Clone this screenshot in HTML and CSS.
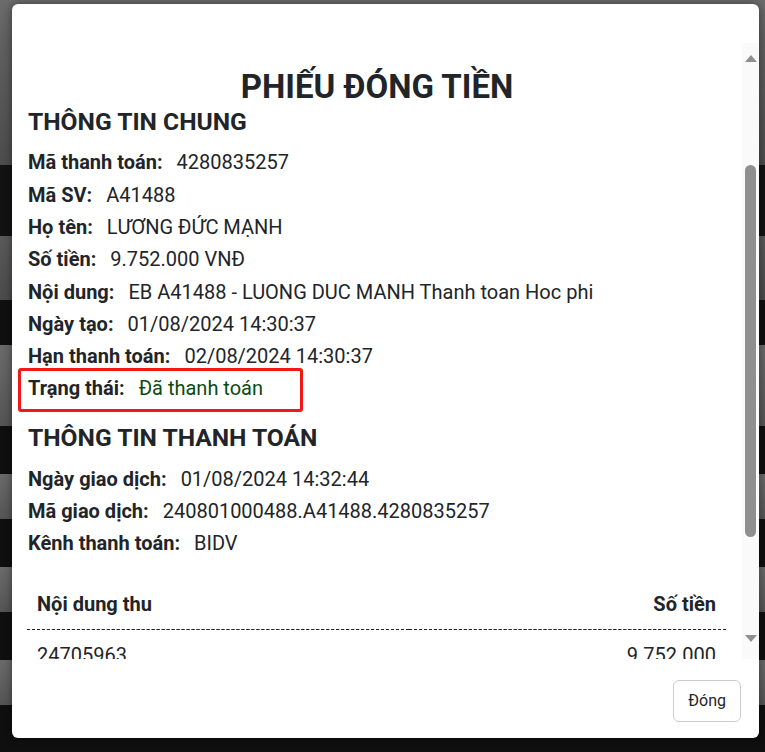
FILE: index.html
```html
<!DOCTYPE html>
<html lang="vi">
<head>
<meta charset="utf-8">
<title>Phiếu đóng tiền</title>
<link rel="stylesheet" href="styles.css">
</head>
<body>
<div class="modal">
  <div class="modal-header"></div>
  <div class="modal-body">
    <div class="scroll-area" id="scrollArea">
      <div class="receipt">
        <div class="receipt-top">
          <div class="school">Cổng thanh toán học phí</div>
        </div>
        <h2 class="title">PHIẾU ĐÓNG TIỀN</h2>
        <section class="section first">
          <h4 class="section-title">THÔNG TIN CHUNG</h4>
          <div class="row"><span class="label">Mã thanh toán:</span><span class="value">4280835257</span></div>
          <div class="row"><span class="label">Mã SV:</span><span class="value">A41488</span></div>
          <div class="row"><span class="label">Họ tên:</span><span class="value">LƯƠNG ĐỨC MẠNH</span></div>
          <div class="row"><span class="label">Số tiền:</span><span class="value">9.752.000 VNĐ</span></div>
          <div class="row"><span class="label">Nội dung:</span><span class="value">EB A41488 - LUONG DUC MANH Thanh toan Hoc phi</span></div>
          <div class="row"><span class="label">Ngày tạo:</span><span class="value">01/08/2024 14:30:37</span></div>
          <div class="row"><span class="label">Hạn thanh toán:</span><span class="value">02/08/2024 14:30:37</span></div>
          <div class="row status"><span class="label">Trạng thái:</span><span class="value paid">Đã thanh toán</span><span class="highlight"></span></div>
        </section>
        <section class="section">
          <h4 class="section-title">THÔNG TIN THANH TOÁN</h4>
          <div class="row"><span class="label">Ngày giao dịch:</span><span class="value">01/08/2024 14:32:44</span></div>
          <div class="row"><span class="label">Mã giao dịch:</span><span class="value">240801000488.A41488.4280835257</span></div>
          <div class="row"><span class="label">Kênh thanh toán:</span><span class="value">BIDV</span></div>
        </section>
        <table class="items">
          <thead>
            <tr><th class="left">Nội dung thu</th><th class="right">Số tiền</th></tr>
          </thead>
          <tbody>
            <tr><td class="left">24705963</td><td class="right">9.752.000</td></tr>
            <tr class="total"><td class="left">Tổng cộng</td><td class="right">9.752.000</td></tr>
          </tbody>
        </table>
      </div>
    </div>
    <div class="scrollbar" aria-hidden="true">
      <div class="sb-button">
        <svg class="sb-arrow up" width="12" height="7" viewBox="0 0 12 7"><path d="M6 0L12 7H0z" fill="#909090"/></svg>
      </div>
      <div class="sb-track"><div class="sb-thumb"></div></div>
      <div class="sb-button down">
        <svg class="sb-arrow" width="12" height="7" viewBox="0 0 12 7"><path d="M0 0H12L6 7z" fill="#909090"/></svg>
      </div>
    </div>
  </div>
  <div class="modal-footer">
    <button class="btn-close" type="button">Đóng</button>
  </div>
</div>
<script src="script.js"></script>
</body>
</html>
```
FILE: styles.css
```css
* { box-sizing: border-box; }

html, body {
  margin: 0;
  height: 752px;
  overflow: hidden;
}

body {
  font-family: Roboto, "Liberation Sans", sans-serif;
  color: #212529;
  background: linear-gradient(to bottom,
    #6c6c6c 0, #606060 40px, #4c4c4c 165px,
    #121212 165px, #121212 236px,
    #5a5a5a 236px, #4a4a4a 300px,
    #101010 300px, #101010 345px,
    #6a6a6a 345px, #555 426px,
    #0f0f0f 426px, #0f0f0f 474px,
    #6a6a6a 474px, #555 519px,
    #0f0f0f 519px, #0f0f0f 567px,
    #6a6a6a 567px, #555 612px,
    #0f0f0f 612px, #0f0f0f 660px,
    #6a6a6a 660px, #555 705px,
    #0f0f0f 705px, #0f0f0f 752px);
}

.modal {
  margin: 4px 0 0 12px;
  width: 747px;
  height: 734px;
  background: #fff;
  border-radius: 6px;
  overflow: hidden;
  display: flex;
  flex-direction: column;
  box-shadow: 0 0 10px rgba(0, 0, 0, 0.45);
}

.modal-header {
  height: 39px;
  flex: none;
}

.modal-body {
  height: 616px;
  flex: none;
  display: flex;
}

.scroll-area {
  flex: 1;
  min-width: 0;
  overflow: hidden;
}

.scrollbar {
  width: 17px;
  flex: none;
  background: #fafafa;
  display: flex;
  flex-direction: column;
}

.sb-button {
  height: 24px;
  flex: none;
  display: flex;
  justify-content: center;
  align-items: flex-start;
  padding-top: 12px;
}

.sb-button.down {
  padding-top: 0;
}

.sb-arrow { display: block; }

.sb-track {
  flex: 1;
  padding-top: 98px;
  padding-left: 3px;
}

.sb-thumb {
  width: 11px;
  height: 372px;
  background: #8f8f8f;
  border-radius: 6px;
}

.receipt {
  padding: 16px 16px 0 16px;
  min-height: 941px;
}

.receipt-top {
  height: 170px;
  display: flex;
  align-items: center;
  justify-content: center;
}

.school {
  font-size: 20px;
  font-weight: 700;
  color: #212529;
}

.title {
  margin: 0;
  font-size: 33px;
  line-height: 1.2;
  font-weight: 700;
  text-align: center;
}

.section { margin-top: 19px; }
.section.first { margin-top: 1px; }

.section-title {
  margin: 0 0 10px 0;
  font-size: 24.6px;
  line-height: 28.8px;
  font-weight: 700;
}

.row {
  font-size: 20px;
  line-height: 32.3px;
  height: 32.3px;
  white-space: nowrap;
}

.label {
  font-weight: 700;
  margin-right: 14px;
}

.value { font-weight: 400; }
.paid { color: #0a4a12; }

.status { position: relative; }

.highlight {
  position: absolute;
  left: -10px;
  top: -4px;
  width: 285px;
  height: 44px;
  border: 3px solid #f21818;
  border-radius: 3px;
}

.items {
  margin-top: 20px;
  margin-left: -1px;
  width: calc(100% + 1px);
  border-collapse: collapse;
  font-size: 20px;
  line-height: 30px;
}

.items th {
  font-weight: 700;
  padding: 10px;
  border-bottom: 1px dashed #212529;
}

.items td {
  padding: 10px;
}

.items .left { text-align: left; }
.items .right { text-align: right; }

.items .total td { font-weight: 700; }

.modal-footer {
  flex: 1;
  display: flex;
  justify-content: flex-end;
  align-items: flex-start;
  padding: 21px 18px 0 0;
}

.btn-close {
  font-family: Roboto, "Liberation Sans", sans-serif;
  font-size: 16px;
  line-height: 24px;
  padding: 8px 14px;
  color: #212529;
  background: #fff;
  border: 1px solid #cbcbcb;
  border-radius: 6px;
}
```
FILE: script.js
```js
document.getElementById('scrollArea').scrollTop = 162;
```
